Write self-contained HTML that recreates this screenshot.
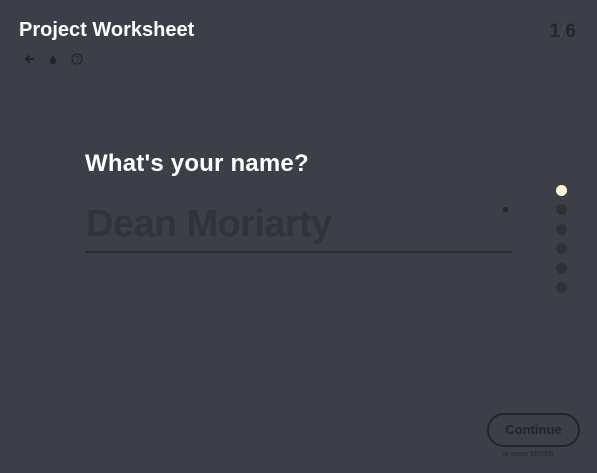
<!DOCTYPE html>
<html><head><style>
html,body{margin:0;padding:0;width:597px;height:473px;background:#3c3f47;overflow:hidden;font-family:"Liberation Sans",sans-serif;position:relative}
.t{position:absolute;left:19px;top:19px;color:#fff;font-weight:bold;font-size:20px;letter-spacing:0px}
.n{position:absolute;right:21px;top:21px;color:#25272c;font-weight:bold;font-size:19px}
.n span{color:#4a4d55;font-weight:normal}
.q{position:absolute;left:85px;top:150px;color:#fff;font-weight:bold;font-size:24px;letter-spacing:0.2px}
.a{position:absolute;left:86px;top:203px;color:#31333a;font-weight:bold;font-size:38px;letter-spacing:-0.6px}
.line{position:absolute;left:85px;top:251px;width:427px;height:2px;background:#2a2c31}
.star{position:absolute;left:503px;top:207px;width:5px;height:5px;background:#25272c;border-radius:1px}
.dot{position:absolute;left:556px;width:11px;height:11px;border-radius:50%;background:#2f3137}
.btn{position:absolute;left:487px;top:413px;width:89px;height:30px;border:2px solid #222428;border-radius:17px;color:#222428;font-weight:bold;font-size:13px;text-align:center;line-height:30px}
.e{position:absolute;left:503px;top:451px;font-size:7px;color:#25272c}
</style></head><body>
<div class="t">Project Worksheet</div>
<svg style="position:absolute;left:22px;top:52px" width="70" height="14" viewBox="0 0 70 14">
<path d="M12 7H4M7.5 3.5 4 7l3.5 3.5" stroke="#222428" stroke-width="2" fill="none"/>
<path d="M31 3c-2 3-3 4.5-3 6a3 3 0 0 0 6 0c0-1.5-1-3-3-6z" fill="#222428"/>
<circle cx="55" cy="7" r="5" stroke="#222428" stroke-width="1.2" fill="none"/>
<text x="55" y="10" font-size="8" text-anchor="middle" fill="#222428" font-family="Liberation Sans">?</text>
</svg>
<div class="n">1<span>/</span>6</div>
<div class="q">What's your name?</div>
<div class="a">Dean Moriarty</div>
<div class="star"></div>
<div class="line"></div>
<div class="dot" style="top:185px;background:#fdf8d6"></div>
<div class="dot" style="top:204px"></div>
<div class="dot" style="top:224px"></div>
<div class="dot" style="top:243px"></div>
<div class="dot" style="top:263px"></div>
<div class="dot" style="top:282px"></div>
<div class="btn">Continue</div>
<div class="e">or press ENTER</div>
</body></html>
